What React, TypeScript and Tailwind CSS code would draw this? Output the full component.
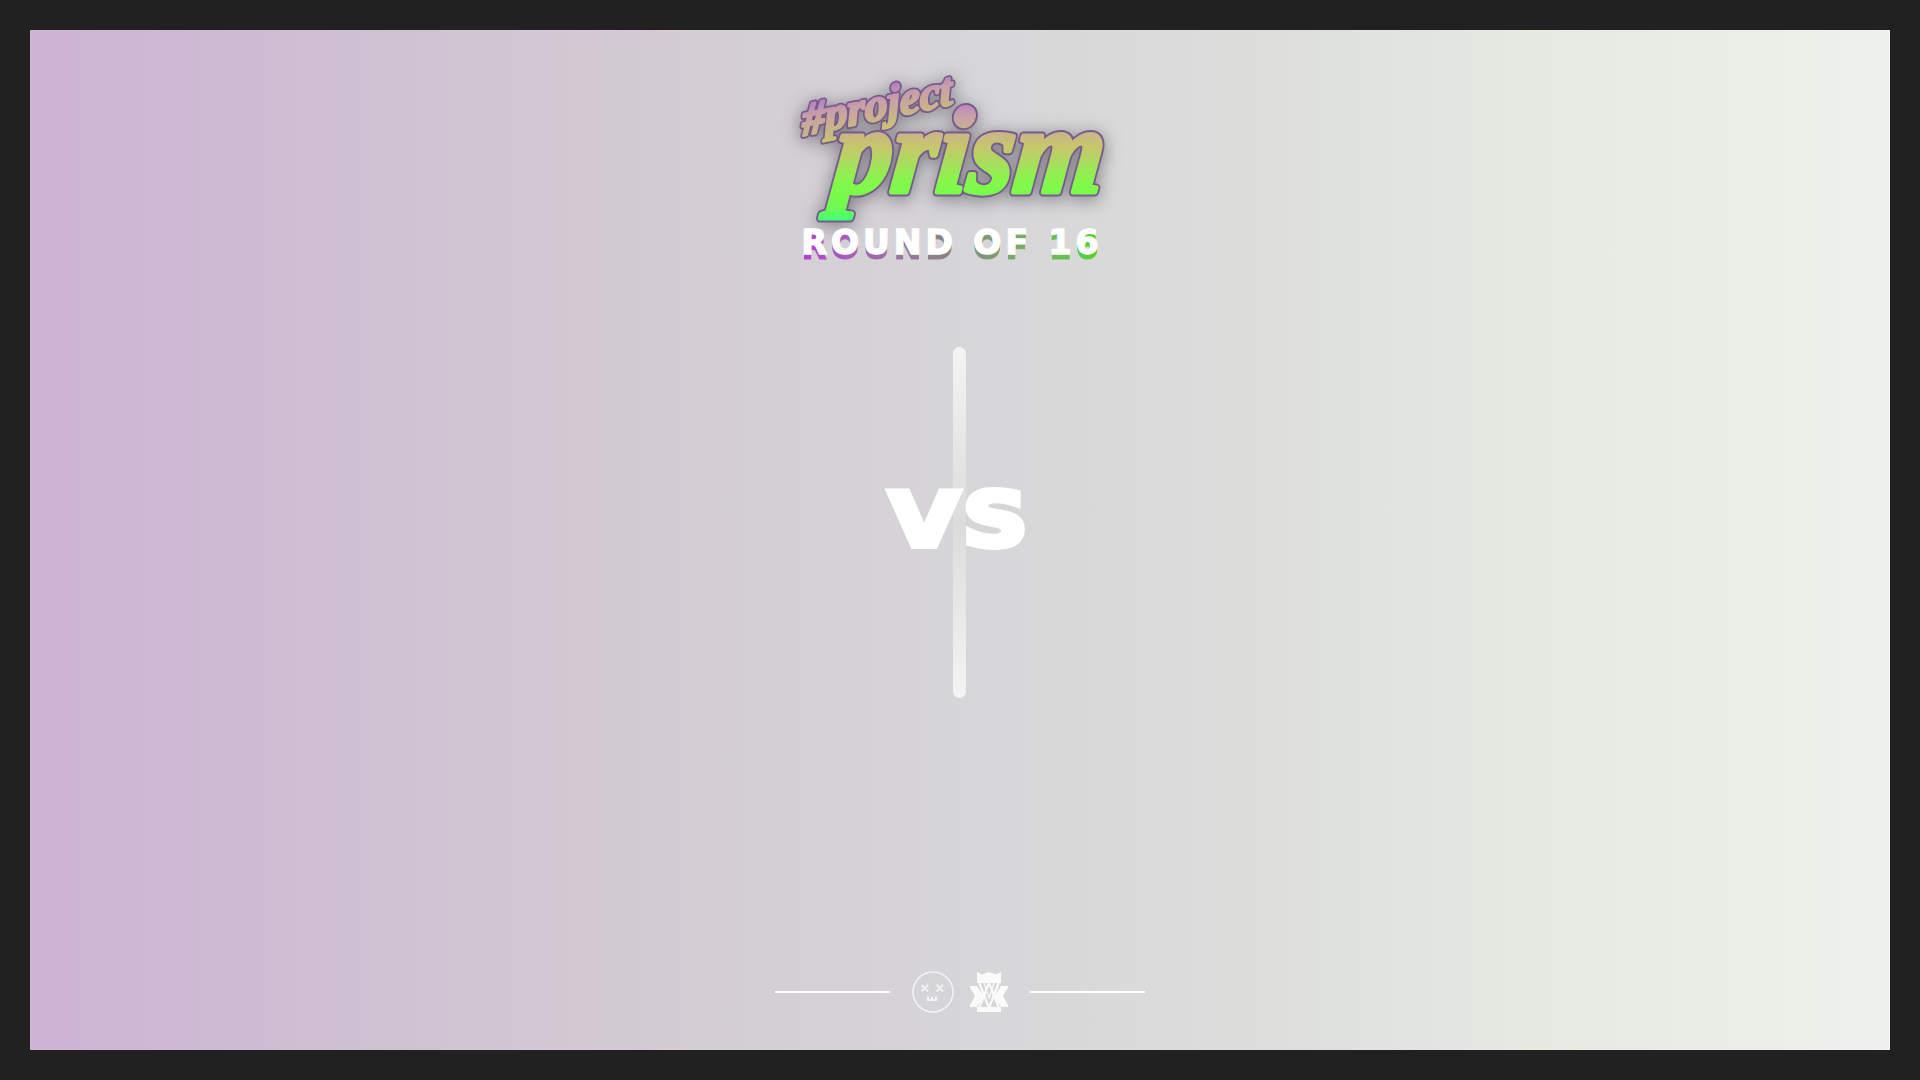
function PrismLogo() {
  const project = { x: 28, y: 64, fontSize: 46, transform: "rotate(-12 28 64) skewX(-8)" };
  const prism = { x: 60, y: 122, fontSize: 122, textLength: 270, transform: "skewX(-6)" };
  return (
    <svg width="336" height="160" viewBox="0 0 336 160" className="overflow-visible drop-shadow-[0_3px_9px_rgba(40,40,50,0.5)]">
      <defs>
        <linearGradient id="prismFill" gradientUnits="userSpaceOnUse" x1="0" y1="10" x2="0" y2="155">
          <stop offset="0" stopColor="#9a4cf5" />
          <stop offset="0.25" stopColor="#c9a0a8" />
          <stop offset="0.46" stopColor="#c8c66c" />
          <stop offset="0.7" stopColor="#84f84a" />
          <stop offset="0.88" stopColor="#70fa50" />
          <stop offset="1" stopColor="#2cff86" />
        </linearGradient>
      </defs>
      <g strokeLinejoin="round" fontFamily="'Liberation Serif', serif" fontStyle="italic" fontWeight="700">
        <g aria-hidden="true" fill="#785a8c" stroke="#785a8c">
          <text {...project} strokeWidth="6">#project</text>
          <text {...prism} strokeWidth="9" lengthAdjust="spacingAndGlyphs">prism</text>
        </g>
        <g fill="url(#prismFill)" stroke="url(#prismFill)">
          <text {...project} strokeWidth="2.500">#project</text>
          <text {...prism} strokeWidth="5" lengthAdjust="spacingAndGlyphs">prism</text>
        </g>
      </g>
    </svg>
  );
}

function RoundTitle() {
  const cls = "col-start-1 row-start-1 font-['DejaVu_Sans',sans-serif] font-bold text-[33px] leading-none tracking-[4px] [word-spacing:1px] whitespace-nowrap";
  return (
    <div className="grid -mt-[4px]">
      <span aria-hidden="true" className={cls + " translate-y-[5px] bg-gradient-to-r from-[#b43cd2] via-[#85857f] to-[#48d820] bg-clip-text text-transparent [-webkit-text-stroke:1px_transparent]"}>ROUND OF 16</span>
      <span className={cls + " relative text-white [-webkit-text-stroke:1.5px_white]"}>ROUND OF 16</span>
    </div>
  );
}

function FaceIcon() {
  return (
    <svg width="42" height="42" viewBox="0 0 42 42" fill="none" stroke="#f3f3f3">
      <circle cx="21" cy="21" r="20" strokeWidth="1.500" />
      <path d="M9.500 14l6.500 6.500M16 14l-6.500 6.500M24.500 14l6.500 6.500M31 14l-6.500 6.500" strokeWidth="2" />
      <path d="M16 25.500v3.500h8v-3.500M20 26v3" strokeWidth="2" />
    </svg>
  );
}

function CrestIcon() {
  return (
    <svg width="38" height="42" viewBox="0 0 38 42" fill="#fbfbfb">
      {/* crown */}
      <path d="M7 1l5 2.500L19 1l7 2.500L31 1v8H7z" />
      <path d="M7 9h24v3H7zM7 36h24v5H7z" />
      {/* wings */}
      <path d="M-1 15h8l6.500 10L7 36H-1l6-11zM39 15h-8l-6.500 10L31 36h8l-6-11z" />
      {/* interlaced triangles */}
      <path d="M9 11l10 26 10-26M9 37l10-25 10 25" fill="none" stroke="#fbfbfb" strokeWidth="2.200" />
      <path d="M14 12l5 15 5-15" fill="none" stroke="#fbfbfb" strokeWidth="1.200" />
    </svg>
  );
}

export default function App() {
  return (
    <div className="h-screen bg-[#212121] p-[30px]">
      <div className="h-full flex flex-col items-center bg-[linear-gradient(90deg,#cdb3d5_0%,#d2c9d2_30%,#d6d5d8_50%,#dcdddb_65%,#e5e9e2_80%,#eef2ec_100%)]">
        {/* logo + round */}
        <div className="flex flex-col items-center pt-[40px] pr-4">
          <PrismLogo />
          <RoundTitle />
        </div>

        {/* vs */}
        <div className="grid place-items-center mt-[88px]">
          <div className="col-start-1 row-start-1 w-[13px] h-[351px] rounded-full bg-gradient-to-b from-[#f4f4f4] via-[#dcdcdd] to-[#f4f4f4]" />
          <span className="col-start-1 row-start-1 relative -translate-y-[3px] scale-x-[1.22] text-white font-['DejaVu_Sans',sans-serif] font-bold text-[74px] leading-none tracking-[3px] [-webkit-text-stroke:6px_white]">VS</span>
        </div>

        {/* footer */}
        <div className="mt-auto pb-[37px] flex items-center">
          <div className="w-[115px] h-[2px] bg-white" />
          <div className="flex items-center gap-[16px] mx-[22px]">
            <FaceIcon />
            <CrestIcon />
          </div>
          <div className="w-[115px] h-[2px] bg-white" />
        </div>
      </div>
    </div>
  );
}
